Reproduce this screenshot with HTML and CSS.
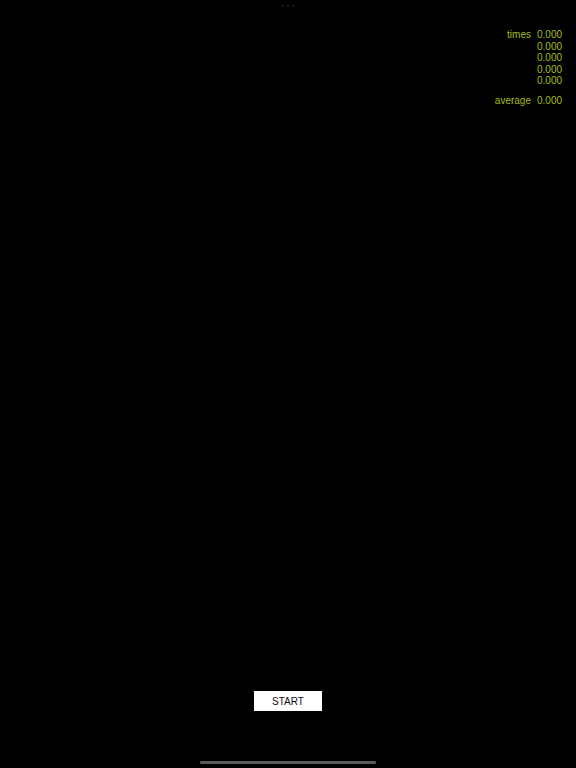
FILE: index.html
```html
<!DOCTYPE html>
<html>
<head>
<meta charset="utf-8">
<link rel="stylesheet" href="styles.css">
</head>
<body>
<div class="screen">
  <div class="dots"><span></span><span></span><span></span></div>
  <div class="stats">
    <div class="row"><span class="label">times</span><span class="val">0.000</span></div>
    <div class="row"><span class="label"></span><span class="val">0.000</span></div>
    <div class="row"><span class="label"></span><span class="val">0.000</span></div>
    <div class="row"><span class="label"></span><span class="val">0.000</span></div>
    <div class="row"><span class="label"></span><span class="val">0.000</span></div>
    <div class="row avg"><span class="label">average</span><span class="val">0.000</span></div>
  </div>
  <div class="spacer"></div>
  <div class="actions"><button class="start">START</button></div>
  <div class="home"></div>
</div>
</body>
</html>
```
FILE: styles.css
```css
html, body {
  margin: 0;
  padding: 0;
  background: #000;
}
.screen {
  width: 576px;
  height: 768px;
  display: flex;
  flex-direction: column;
  font-family: "Liberation Sans", Arial, sans-serif;
  position: relative;
}
.dots {
  position: absolute;
  top: 5px;
  left: 282px;
  display: flex;
  gap: 3px;
}
.dots span {
  width: 2px;
  height: 2px;
  border-radius: 50%;
  background: #262626;
}
.stats {
  padding-top: 29px;
  padding-right: 15px;
  display: flex;
  flex-direction: column;
  align-items: flex-end;
  color: #a6bb1e;
  font-size: 10px;
  line-height: 11.5px;
}
.row {
  display: flex;
  gap: 6px;
}
.row .val {
  width: 24px;
  text-align: left;
}
.row.avg {
  margin-top: 8.5px;
}
.spacer {
  flex: 1;
}
.actions {
  display: flex;
  justify-content: center;
}
.start {
  width: 68px;
  height: 20px;
  margin: 0;
  padding: 0;
  border: none;
  background: #fff;
  color: #111;
  font-family: "Liberation Sans", Arial, sans-serif;
  font-size: 10px;
}
.home {
  width: 176px;
  height: 3px;
  border-radius: 2px;
  background: #5a5a5a;
  margin: 50px auto 4px;
}
```
